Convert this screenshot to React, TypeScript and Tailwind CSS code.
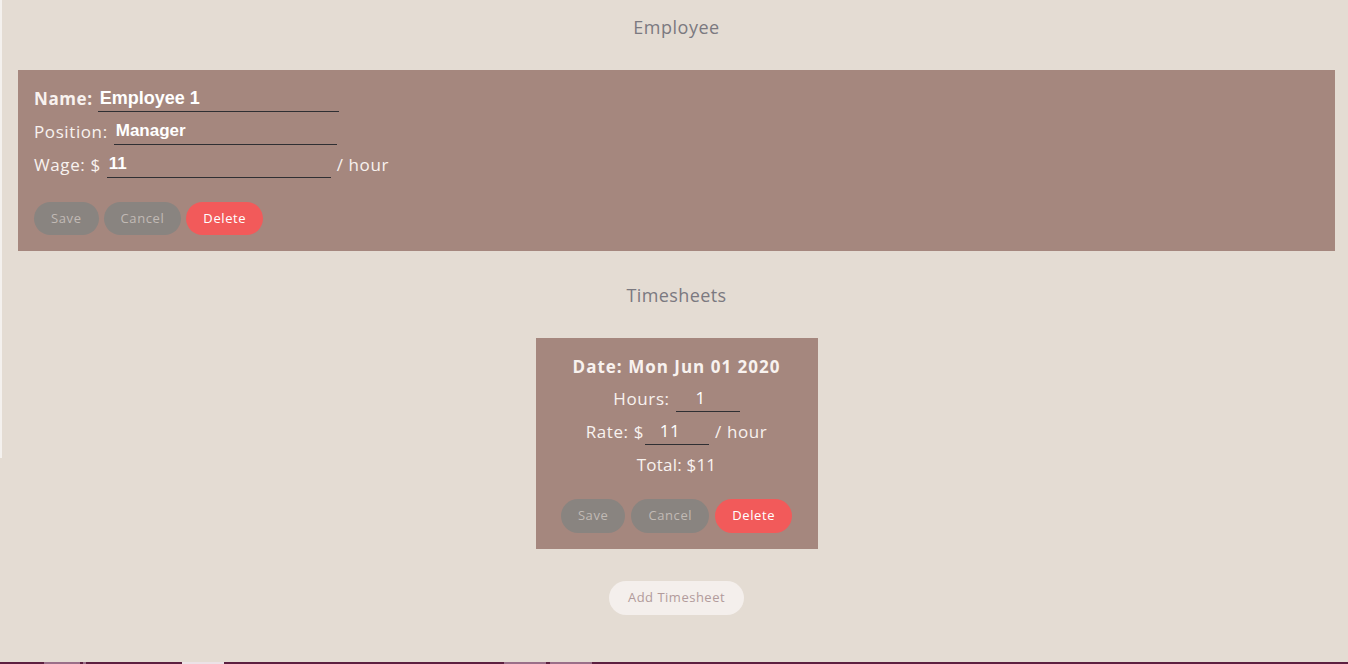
import { useState } from 'react';

const label = "font-['Open_Sans',sans-serif] tracking-[0.6px]";
const field =
  "bg-transparent border-0 border-b border-[#2f2f33] outline-none text-white h-[26px] leading-[26px] px-[2px]";
const boldField = "font-bold font-['Liberation_Sans',Arial,sans-serif] tracking-normal";

function PillButton({ text, tone, tall }: { text: string; tone: 'muted' | 'danger'; tall?: boolean }) {
  return (
    <button
      className={`${tall ? 'h-[34px]' : 'h-[33px]'} rounded-full px-[17px] text-[13px] font-['Open_Sans',sans-serif] tracking-[0.6px] ${
        tone === 'danger' ? 'bg-[#f25a5a] text-white' : 'bg-[#898480] text-[#c1bab5]'
      }`}
    >
      {text}
    </button>
  );
}

export default function App() {
  const [name, setName] = useState('Employee 1');
  const [position, setPosition] = useState('Manager');
  const [wage, setWage] = useState('11');
  const [hours, setHours] = useState('1');
  const [rate, setRate] = useState('11');

  return (
    <div className="flex min-h-screen bg-[#e4dcd3]">
      {/* thin white edge on the left */}
      <div className="w-[2px] shrink-0">
        <div className="h-[458px] bg-[#f4f1ee]" />
      </div>

      <div className="flex flex-1 flex-col">
        <div className="flex-1 pl-[3px]">
          {/* Employee section */}
          <h2 className="pt-[15px] text-center text-[18px] leading-6 text-[#7b7980] font-['Open_Sans',sans-serif] tracking-[0.5px]">
            Employee
          </h2>

          <div className="ml-[13px] mr-[13px] mt-[31px] bg-[#a5877e] px-4 pt-[12px] pb-[16px] text-[17px] text-[#f8f2ef]">
            <div className="flex h-[33px] items-center">
              <span className={`mr-[5px] font-bold ${label}`}>Name:</span>
              <input
                className={`${field} ${boldField} w-[241px] text-[18px]`}
                value={name}
                onChange={(e) => setName(e.target.value)}
              />
            </div>
            <div className="flex h-[33px] items-center">
              <span className={`mr-[6px] ${label}`}>Position:</span>
              <input
                className={`${field} ${boldField} w-[223px] text-[17px]`}
                value={position}
                onChange={(e) => setPosition(e.target.value)}
              />
            </div>
            <div className="flex h-[33px] items-center">
              <span className={`mr-[6px] ${label}`}>Wage: $</span>
              <input
                className={`${field} ${boldField} w-[224px] text-[17px]`}
                value={wage}
                onChange={(e) => setWage(e.target.value)}
              />
              <span className={`ml-[6px] ${label}`}>/ hour</span>
            </div>
            <div className="mt-[21px] flex gap-[5px]">
              <PillButton text="Save" tone="muted" />
              <PillButton text="Cancel" tone="muted" />
              <PillButton text="Delete" tone="danger" />
            </div>
          </div>

          {/* Timesheets section */}
          <h2 className="mt-[32px] text-center text-[18px] leading-6 text-[#7b7980] font-['Open_Sans',sans-serif] tracking-[0.4px]">
            Timesheets
          </h2>

          <div className="mt-[31px] flex justify-center">
            <div
              className={`flex w-[282px] flex-col items-center bg-[#a5877e] pt-[13px] pb-[16px] text-[17px] text-[#f8f2ef] ${label}`}
            >
              <div className="flex h-[31px] items-center font-bold tracking-[1px]">Date: Mon Jun 01 2020</div>
              <div className="flex h-[33px] items-center">
                <span className="mr-[6px]">Hours:</span>
                <input
                  className={`${field} ${label} w-[64px] pr-4 text-center text-[17px]`}
                  value={hours}
                  onChange={(e) => setHours(e.target.value)}
                />
              </div>
              <div className="flex h-[33px] items-center">
                <span className="mr-[1px]">Rate: $</span>
                <input
                  className={`${field} ${label} w-[64px] pr-4 text-center text-[17px]`}
                  value={rate}
                  onChange={(e) => setRate(e.target.value)}
                />
                <span className="ml-[6px]">/ hour</span>
              </div>
              <div className="flex h-[33px] items-center tracking-[0.2px]">
                Total: ${Number(hours) * Number(rate)}
              </div>
              <div className="mt-[18px] flex gap-[6px]">
                <PillButton text="Save" tone="muted" tall />
                <PillButton text="Cancel" tone="muted" tall />
                <PillButton text="Delete" tone="danger" tall />
              </div>
            </div>
          </div>

          <div className="mt-[32px] flex justify-center">
            <button className="h-[34px] rounded-full bg-[#f4efec] px-[19px] text-[13px] text-[#b29b9b] font-['Open_Sans',sans-serif] tracking-[0.5px]">
              Add Timesheet
            </button>
          </div>
        </div>
      </div>

      {/* bottom strip, like a taskbar edge */}
      <div className="fixed bottom-0 left-0 right-0 flex h-[2px] bg-[#5c1f40]">
        <div className="ml-[44px] w-[36px] bg-[#9a6f89]" />
        <div className="ml-[3px] w-[3px] bg-[#9a6f89]" />
        <div className="ml-[96px] w-[42px] bg-[#ece2e7]" />
        <div className="ml-[280px] w-[42px] bg-[#9a6f89]" />
        <div className="ml-[4px] w-[42px] bg-[#9a6f89]" />
      </div>
    </div>
  );
}
